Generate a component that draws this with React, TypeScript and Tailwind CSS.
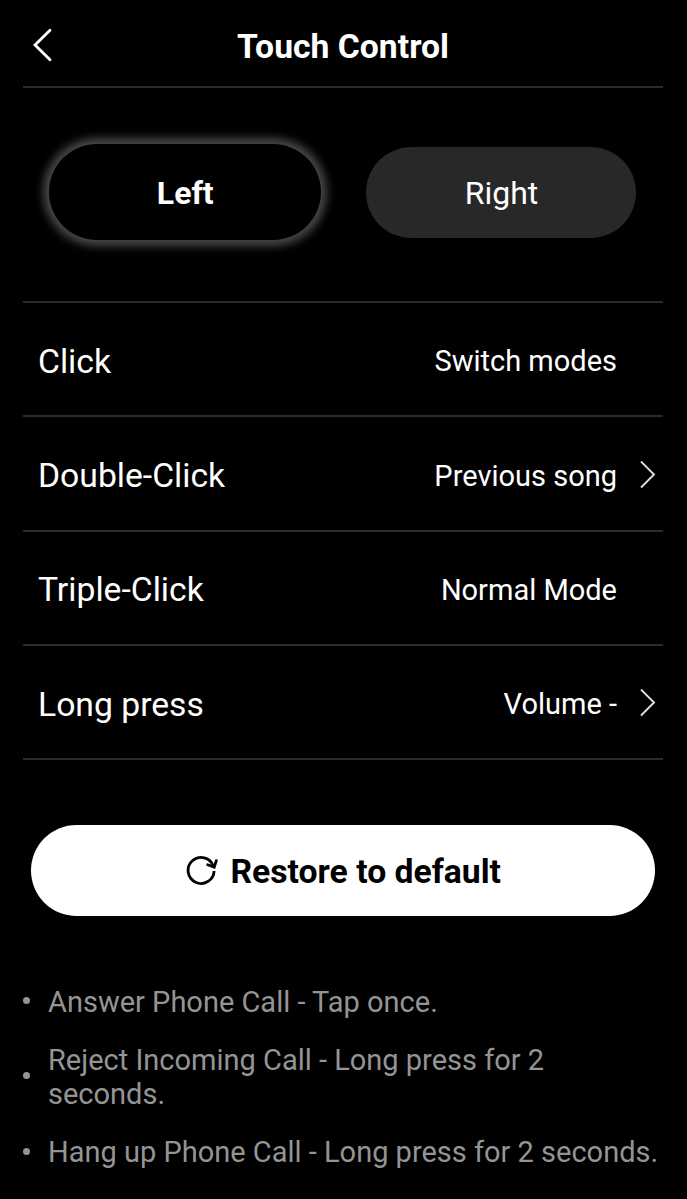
import React from "react";

const rows = [
  { label: "Click", value: "Switch modes", arrow: false },
  { label: "Double-Click", value: "Previous song", arrow: true },
  { label: "Triple-Click", value: "Normal Mode", arrow: false },
  { label: "Long press", value: "Volume -", arrow: true },
];

const notes = [
  "Answer Phone Call - Tap once.",
  "Reject Incoming Call - Long press for 2 seconds.",
  "Hang up Phone Call - Long press for 2 seconds.",
];

export default function App() {
  return (
    <div className="flex h-[1199px] w-[687px] flex-col overflow-hidden bg-black font-['Roboto',sans-serif] text-white">
      <header className="mr-[24px] ml-[23px] grid h-[88px] grid-cols-[40px_1fr_40px] items-center border-b-2 border-[#2b2b2b]">
        <button aria-label="Back" className="flex h-[86px] items-center pt-[3px] pl-[9px]">
          <svg width="20" height="34" viewBox="0 0 20 34" fill="none" stroke="white" strokeWidth="2.8" strokeLinecap="round">
            <path d="M18 2.2 L3 17 L18 31.8" />
          </svg>
        </button>
        <h1 className="pt-[7px] text-center text-[33.7px] leading-10 font-bold">Touch Control</h1>
      </header>

      <div className="mr-[24px] ml-[23px] flex h-[215px] justify-between border-b-2 border-[#2b2b2b] pr-[27px] pl-[26px] pt-[56px] text-[32px]">
        <button className="h-[96px] w-[271.5px] rounded-full bg-black pt-[2px] pl-[1px] font-bold shadow-[0_0_8px_6px_#464646]">Left</button>
        <button className="mt-[2.5px] h-[91px] w-[270px] rounded-full bg-[#282828] pt-[2px] pl-[1px]">Right</button>
      </div>

      <div className="mr-[24px] ml-[23px]">
        {rows.map((r) => (
          <div key={r.label} className="flex h-[114.25px] items-center border-b-2 border-[#2b2b2b] pr-[7px] pl-[15px]">
            <span className="flex-1 pt-[6px] text-[33.7px]">{r.label}</span>
            <span className="pt-[6px] text-[29px]">{r.value}</span>
            <span className="ml-[23px] w-[16px] pt-[3px]">
              {r.arrow && (
                <svg width="16" height="28" viewBox="0 0 16 28" fill="none" stroke="#e0e0e0" strokeWidth="1.9">
                  <path d="M1 0.5 L14 13.5 L1 26.5" />
                </svg>
              )}
            </span>
          </div>
        ))}
      </div>

      <button className="mt-[64.5px] ml-[30.5px] flex h-[91px] w-[624.5px] shrink-0 items-center justify-center gap-[13px] rounded-full bg-white text-black">
        <svg width="33" height="32" viewBox="0 0 33 32" fill="none" stroke="black" strokeWidth="2.8">
          <path d="M29.1 17 A13 13 0 1 1 28.4 12.2" />
          <path d="M22.7 10.7 L29.2 13.1 L31.3 6.7" strokeLinecap="round" />
        </svg>
        <span className="pt-[4px] text-[33.7px] font-bold">Restore to default</span>
      </button>

      <ul className="mt-[69px] flex flex-col gap-[24.3px] pl-[23px] text-[29px] leading-[34px] text-[#949494]">
        {notes.map((n) => (
          <li key={n} className="flex items-center">
            <span className="mr-[18px] mb-[2px] size-[7px] shrink-0 rounded-full bg-[#949494]" />
            <span className="w-[620px]">{n}</span>
          </li>
        ))}
      </ul>
    </div>
  );
}
